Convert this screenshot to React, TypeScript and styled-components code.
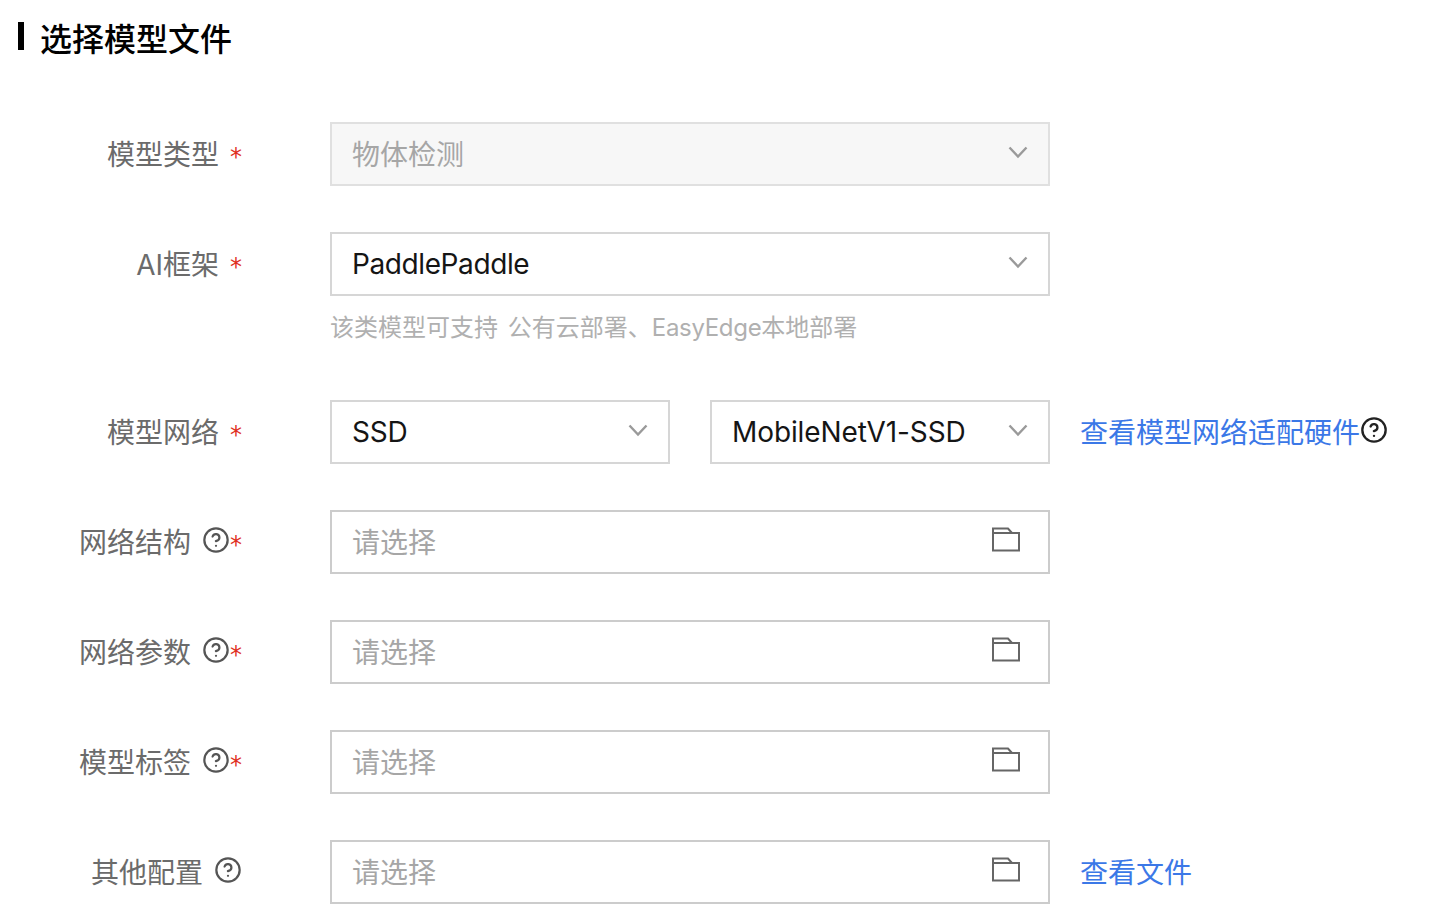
import React from 'react';
import styled, { createGlobalStyle } from 'styled-components';
import { CircleHelp } from 'lucide-react';

const FONT = '"Inter", "Noto Sans CJK SC", sans-serif';

const GlobalStyle = createGlobalStyle`
  html, body {
    margin: 0;
    padding: 0;
    background: #fff;
    font-family: ${FONT};
  }
`;

const Page = styled.div`
  width: 1436px;
  height: 924px;
  overflow: hidden;
  box-sizing: border-box;
  padding-top: 22px;
`;

const Heading = styled.h2`
  display: flex;
  align-items: flex-start;
  gap: 16px;
  height: 28px;
  margin: 0 0 72px 18px;
  font-size: 32px;
  font-weight: 500;
  line-height: 36px;
  color: #000;

  &::before {
    content: '';
    flex: none;
    width: 6px;
    height: 28px;
    background: #000;
  }
`;

const Form = styled.div`
  display: flex;
  flex-direction: column;
  gap: 46px;
`;

const Row = styled.div`
  display: grid;
  grid-template-columns: 242px 1fr;
  column-gap: 88px;
  align-items: start;
`;

const Label = styled.div`
  display: flex;
  justify-content: flex-end;
  align-items: center;
  box-sizing: border-box;
  height: 64px;
  padding-bottom: 2px;
  font-size: 28px;
  color: #6b6b6b;
`;

const HelpIcon = styled(CircleHelp)`
  flex: none;
  margin-left: 11px;
  margin-top: -2px;
  color: #555;
`;

const Star = styled.span<{ $gap: number }>`
  width: 12px;
  margin-left: ${(p) => p.$gap}px;
  margin-top: 8px;
  font-family: "DejaVu Sans", sans-serif;
  font-size: 24px;
  line-height: 26px;
  color: #e0301e;
  text-align: center;
`;

const Controls = styled.div`
  display: flex;
  align-items: center;
  gap: 40px;
`;

const Field = styled.div<{
  $width: number;
  $disabled?: boolean;
  $empty?: boolean;
  $tracking?: number;
}>`
  display: flex;
  align-items: center;
  justify-content: space-between;
  flex: none;
  box-sizing: border-box;
  width: ${(p) => p.$width}px;
  height: 64px;
  padding: ${(p) => (p.$disabled || p.$empty ? '0 21px 2px 20px' : '0 21px 0 20px')};
  border: 2px solid ${(p) => (p.$disabled ? '#e0e0e0' : p.$empty ? '#cccccc' : '#d6d6d6')};
  background: ${(p) => (p.$disabled ? '#f7f7f7' : '#fff')};
  font-size: 28px;
  letter-spacing: ${(p) => p.$tracking ?? 0}px;
  color: ${(p) => (p.$disabled || p.$empty ? '#a6a6a6' : '#151515')};
`;

const Chevron = styled.svg<{ $cjk?: boolean }>`
  flex: none;
  margin-top: ${(p) => (p.$cjk ? -2 : -4)}px;
  margin-right: -1px;
  fill: none;
  stroke: #9a9a9a;
  stroke-width: 2.4;
`;

const Folder = styled.svg`
  flex: none;
  margin-top: -4px;
  margin-right: 7px;
  fill: none;
  stroke: #666;
  stroke-width: 2;
`;

const Hint = styled.div`
  margin: 12px 0 6px;
  font-size: 24px;
  line-height: 40px;
  letter-spacing: 0;
  word-spacing: 3px;
  color: #b0b0b0;
`;

const EasyEdge = styled.span`
  letter-spacing: -0.3px;
`;

const LinkText = styled.a`
  display: flex;
  align-items: center;
  margin-left: -9px;
  padding-bottom: 2px;
  transform: translateX(-1px);
  font-size: 28px;
  color: #3b78e7;
  cursor: pointer;
`;

const LinkHelp = styled(CircleHelp)`
  flex: none;
  margin-left: 0;
  margin-top: -3px;
  color: #222;
`;

const ChevronIcon = ({ cjk }: { cjk?: boolean }) => (
  <Chevron $cjk={cjk} width="20" height="13" viewBox="0 0 20 13">
    <path d="M1.5 1.5 L10 10.5 L18.5 1.5" />
  </Chevron>
);

const FolderIcon = () => (
  <Folder width="28" height="25" viewBox="0 0 28 25">
    <path d="M1 23.5 V1.5 H16 L20 6 H27 V23.5 Z" />
    <path d="M1 6 H20" />
  </Folder>
);

const Select = ({
  value,
  width,
  disabled,
  tracking,
}: {
  value: string;
  width: number;
  disabled?: boolean;
  tracking?: number;
}) => (
  <Field $width={width} $disabled={disabled} $tracking={tracking}>
    {value}
    <ChevronIcon cjk={disabled} />
  </Field>
);

const FilePicker = () => (
  <Field $width={720} $empty>
    请选择
    <FolderIcon />
  </Field>
);

const FieldLabel = ({ text, help, required = true }: { text: string; help?: boolean; required?: boolean }) => (
  <Label>
    {text}
    {help && <HelpIcon size={28} strokeWidth={1.9} />}
    {required && <Star $gap={help ? 0 : 11}>*</Star>}
  </Label>
);

const App = () => (
  <Page>
    <GlobalStyle />
    <Heading>选择模型文件</Heading>
    <Form>
      <Row>
        <FieldLabel text="模型类型" />
        <Select value="物体检测" width={720} disabled />
      </Row>
      <Row>
        <FieldLabel text="AI框架" />
        <div>
          <Select value="PaddlePaddle" width={720} tracking={-0.4} />
          <Hint>
            该类模型可支持 公有云部署、<EasyEdge>EasyEdge</EasyEdge>本地部署
          </Hint>
        </div>
      </Row>
      <Row>
        <FieldLabel text="模型网络" />
        <Controls>
          <Select value="SSD" width={340} tracking={-0.2} />
          <Select value="MobileNetV1-SSD" width={340} tracking={-0.1} />
          <LinkText>
            查看模型网络适配硬件
            <LinkHelp size={28} strokeWidth={2} />
          </LinkText>
        </Controls>
      </Row>
      <Row>
        <FieldLabel text="网络结构" help />
        <FilePicker />
      </Row>
      <Row>
        <FieldLabel text="网络参数" help />
        <FilePicker />
      </Row>
      <Row>
        <FieldLabel text="模型标签" help />
        <FilePicker />
      </Row>
      <Row>
        <FieldLabel text="其他配置" help required={false} />
        <Controls>
          <FilePicker />
          <LinkText>查看文件</LinkText>
        </Controls>
      </Row>
    </Form>
  </Page>
);

export default App;
